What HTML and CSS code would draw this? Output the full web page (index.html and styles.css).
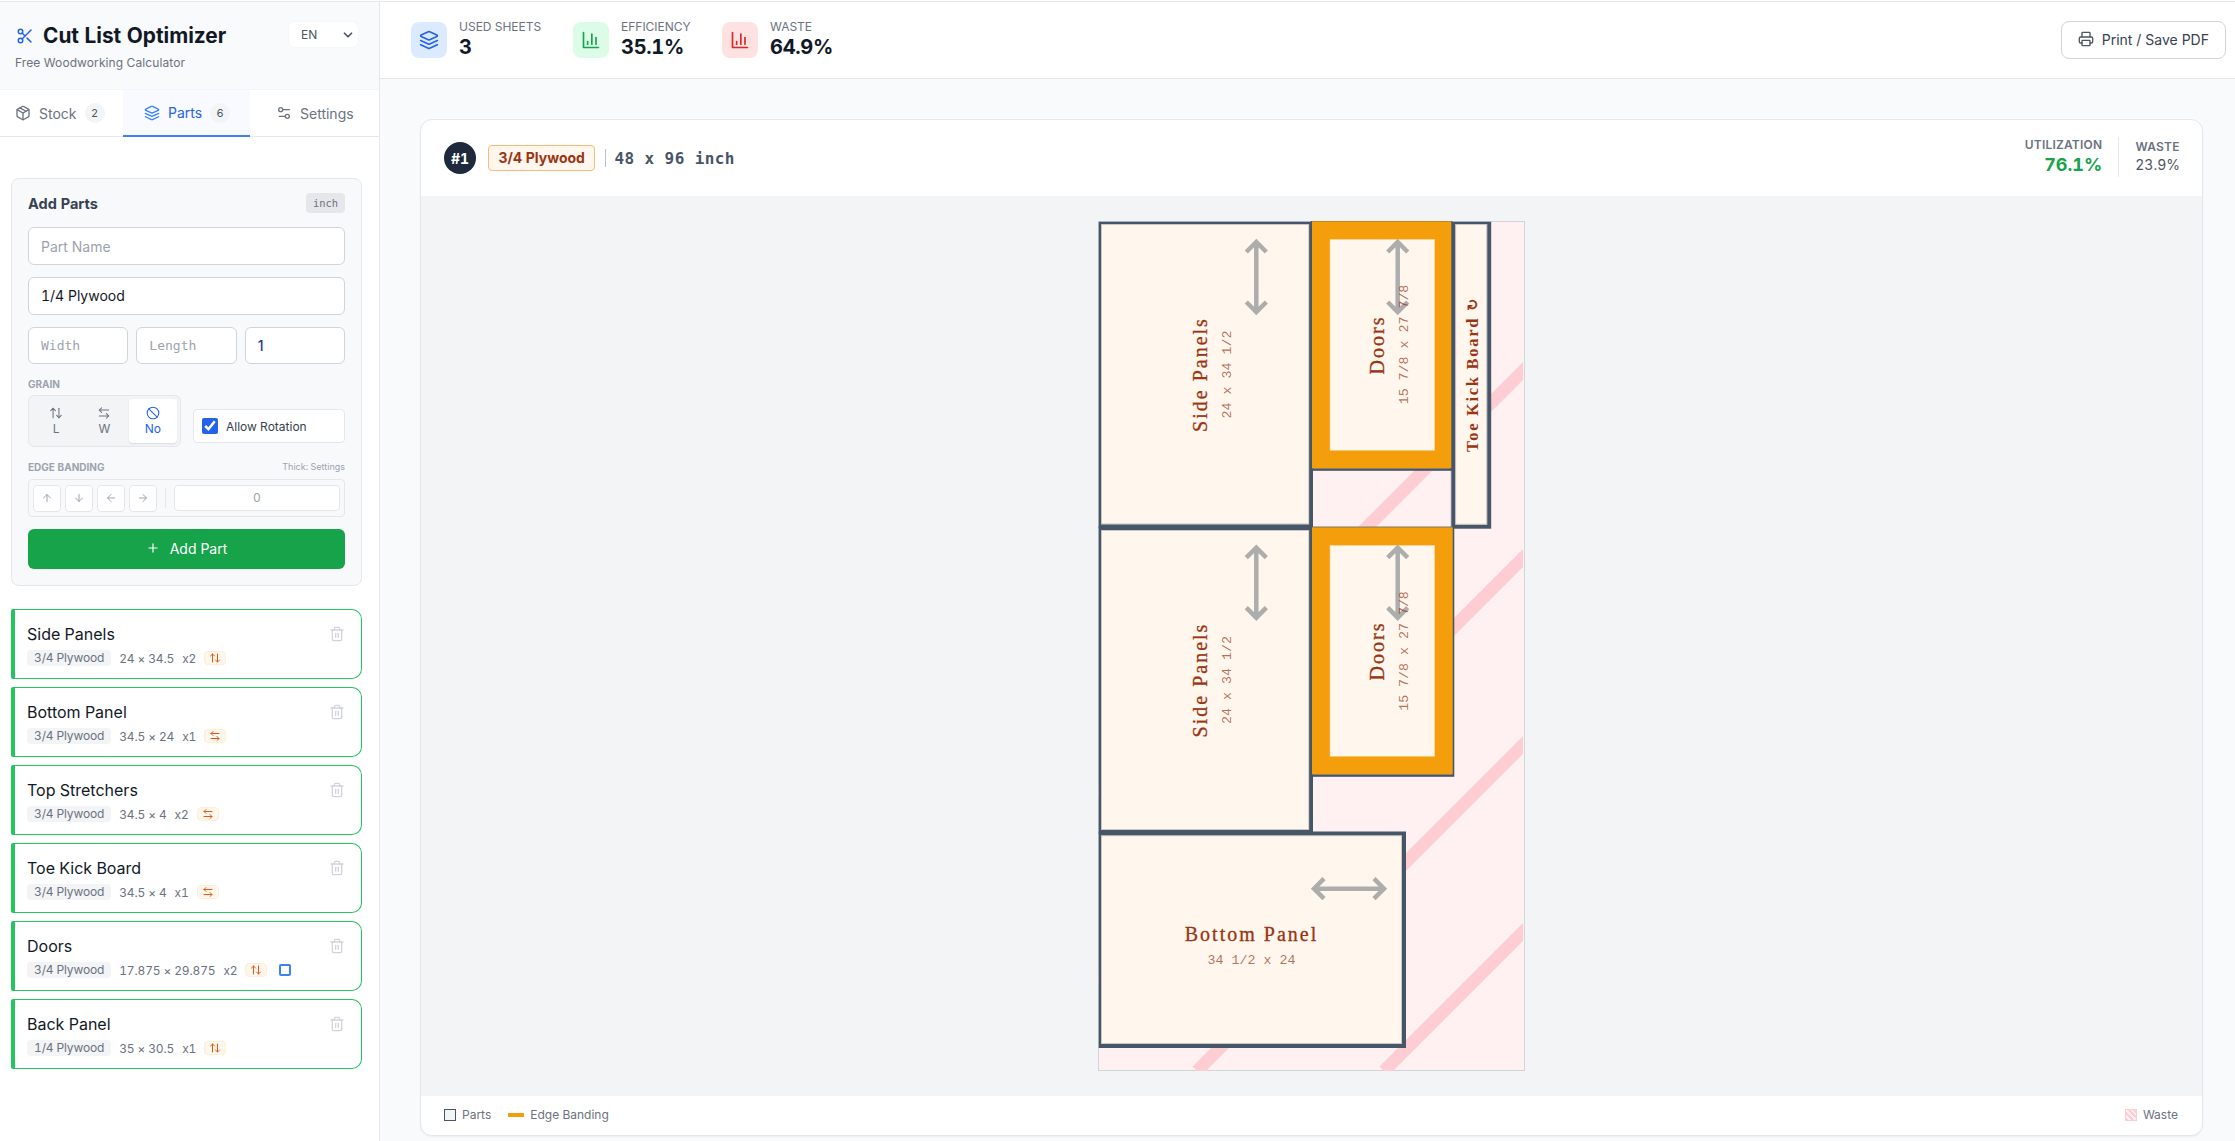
FILE: index.html
```html
<!DOCTYPE html>
<html lang="en">
<head>
    <meta charset="UTF-8">
    <meta name="viewport" content="width=device-width, initial-scale=1.0">
    <title>Cut List Optimizer</title>
    <link rel="stylesheet" href="styles.css">
</head>
<body>
    <svg class="icon-defs" aria-hidden="true">
        <symbol id="i-scissors" viewBox="0 0 24 24"><circle cx="6" cy="6" r="3"/><path d="M8.12 8.12 12 12"/><path d="M20 4 8.12 15.88"/><circle cx="6" cy="18" r="3"/><path d="M14.8 14.8 20 20"/></symbol>
        <symbol id="i-package" viewBox="0 0 24 24"><path d="M11 21.73a2 2 0 0 0 2 0l7-4A2 2 0 0 0 21 16V8a2 2 0 0 0-1-1.73l-7-4a2 2 0 0 0-2 0l-7 4A2 2 0 0 0 3 8v8a2 2 0 0 0 1 1.73z"/><path d="M12 22V12"/><path d="M3.29 7 12 12l8.71-5"/><path d="m7.5 4.27 9 5.15"/></symbol>
        <symbol id="i-layers" viewBox="0 0 24 24"><path d="m12.83 2.18a2 2 0 0 0-1.66 0L2.6 6.08a1 1 0 0 0 0 1.83l8.58 3.91a2 2 0 0 0 1.66 0l8.58-3.9a1 1 0 0 0 0-1.83Z"/><path d="m22 17.65-9.17 4.16a2 2 0 0 1-1.66 0L2 17.65"/><path d="m22 12.65-9.17 4.16a2 2 0 0 1-1.66 0L2 12.65"/></symbol>
        <symbol id="i-sliders" viewBox="0 0 24 24"><path d="M20 7h-9"/><path d="M14 17H5"/><circle cx="17" cy="17" r="3"/><circle cx="7" cy="7" r="3"/></symbol>
        <symbol id="i-chart" viewBox="0 0 24 24"><path d="M3 3v18h18"/><path d="M18 17V9"/><path d="M13 17V5"/><path d="M8 17v-3"/></symbol>
        <symbol id="i-printer" viewBox="0 0 24 24"><path d="M6 18H4a2 2 0 0 1-2-2v-5a2 2 0 0 1 2-2h16a2 2 0 0 1 2 2v5a2 2 0 0 1-2 2h-2"/><path d="M6 9V3a1 1 0 0 1 1-1h10a1 1 0 0 1 1 1v6"/><rect x="6" y="14" width="12" height="8" rx="1"/></symbol>
        <symbol id="i-updown" viewBox="0 0 24 24"><path d="m21 16-4 4-4-4"/><path d="M17 20V4"/><path d="m3 8 4-4 4 4"/><path d="M7 4v16"/></symbol>
        <symbol id="i-leftright" viewBox="0 0 24 24"><path d="M8 3 4 7l4 4"/><path d="M4 7h16"/><path d="m16 21 4-4-4-4"/><path d="M20 17H4"/></symbol>
        <symbol id="i-ban" viewBox="0 0 24 24"><circle cx="12" cy="12" r="10"/><path d="m4.9 4.9 14.2 14.2"/></symbol>
        <symbol id="i-trash" viewBox="0 0 24 24"><path d="M3 6h18"/><path d="M19 6v14c0 1-1 2-2 2H7c-1 0-2-1-2-2V6"/><path d="M8 6V4c0-1 1-2 2-2h4c1 0 2 1 2 2v2"/><path d="M10 11v6"/><path d="M14 11v6"/></symbol>
        <symbol id="i-plus" viewBox="0 0 24 24"><path d="M5 12h14"/><path d="M12 5v14"/></symbol>
        <symbol id="i-up" viewBox="0 0 24 24"><path d="m5 12 7-7 7 7"/><path d="M12 19V5"/></symbol>
        <symbol id="i-down" viewBox="0 0 24 24"><path d="M12 5v14"/><path d="m19 12-7 7-7-7"/></symbol>
        <symbol id="i-left" viewBox="0 0 24 24"><path d="m12 19-7-7 7-7"/><path d="M19 12H5"/></symbol>
        <symbol id="i-right" viewBox="0 0 24 24"><path d="M5 12h14"/><path d="m12 5 7 7-7 7"/></symbol>
        <symbol id="i-chevron" viewBox="0 0 24 24"><path d="m6 9 6 6 6-6"/></symbol>
    </svg>

    <div class="app">
        <aside class="sidebar">
            <header class="brand">
                <div class="brand-text">
                    <h1 class="brand-title"><svg class="icon brand-icon"><use href="#i-scissors"/></svg>Cut List Optimizer</h1>
                    <p class="brand-sub">Free Woodworking Calculator</p>
                </div>
                <div class="lang">EN<svg class="icon lang-chevron"><use href="#i-chevron"/></svg></div>
            </header>

            <nav class="tabs">
                <div class="tab tab-stock"><svg class="icon tab-icon"><use href="#i-package"/></svg>Stock<span class="tab-badge">2</span></div>
                <div class="tab tab-parts"><svg class="icon tab-icon"><use href="#i-layers"/></svg>Parts<span class="tab-badge">6</span></div>
                <div class="tab tab-settings"><svg class="icon tab-icon"><use href="#i-sliders"/></svg>Settings</div>
            </nav>

            <section class="add-card">
                <div class="add-head">
                    <h2 class="add-title">Add Parts</h2>
                    <span class="unit">inch</span>
                </div>
                <input class="field" type="text" placeholder="Part Name">
                <div class="field field-select">1/4 Plywood</div>
                <div class="dims">
                    <input class="field field-mono" type="text" placeholder="Width">
                    <input class="field field-mono" type="text" placeholder="Length">
                    <input class="field field-qty" type="text" value="1">
                </div>

                <div class="section-label">Grain</div>
                <div class="grain-row">
                    <div class="grain">
                        <div class="grain-btn"><svg class="icon"><use href="#i-updown"/></svg>L</div>
                        <div class="grain-btn"><svg class="icon"><use href="#i-leftright"/></svg>W</div>
                        <div class="grain-btn grain-active"><svg class="icon"><use href="#i-ban"/></svg>No</div>
                    </div>
                    <label class="rotation"><input type="checkbox" checked>Allow Rotation</label>
                </div>

                <div class="edge-head">
                    <span class="section-label">Edge Banding</span>
                    <span class="edge-hint">Thick: Settings</span>
                </div>
                <div class="edge">
                    <div class="edge-btn"><svg class="icon"><use href="#i-up"/></svg></div>
                    <div class="edge-btn"><svg class="icon"><use href="#i-down"/></svg></div>
                    <div class="edge-btn"><svg class="icon"><use href="#i-left"/></svg></div>
                    <div class="edge-btn"><svg class="icon"><use href="#i-right"/></svg></div>
                    <span class="edge-sep"></span>
                    <div class="edge-value">0</div>
                </div>

                <button class="add-btn"><svg class="icon"><use href="#i-plus"/></svg>Add Part</button>
            </section>

            <ul class="parts">
                <li class="part">
                    <div class="part-name">Side Panels</div>
                    <div class="part-meta"><span class="pill">3/4 Plywood</span><span>24 × 34.5</span><span>x2</span><span class="grain-tag"><svg class="icon"><use href="#i-updown"/></svg></span></div>
                    <svg class="icon part-trash"><use href="#i-trash"/></svg>
                </li>
                <li class="part">
                    <div class="part-name">Bottom Panel</div>
                    <div class="part-meta"><span class="pill">3/4 Plywood</span><span>34.5 × 24</span><span>x1</span><span class="grain-tag"><svg class="icon"><use href="#i-leftright"/></svg></span></div>
                    <svg class="icon part-trash"><use href="#i-trash"/></svg>
                </li>
                <li class="part">
                    <div class="part-name">Top Stretchers</div>
                    <div class="part-meta"><span class="pill">3/4 Plywood</span><span>34.5 × 4</span><span>x2</span><span class="grain-tag"><svg class="icon"><use href="#i-leftright"/></svg></span></div>
                    <svg class="icon part-trash"><use href="#i-trash"/></svg>
                </li>
                <li class="part">
                    <div class="part-name">Toe Kick Board</div>
                    <div class="part-meta"><span class="pill">3/4 Plywood</span><span>34.5 × 4</span><span>x1</span><span class="grain-tag"><svg class="icon"><use href="#i-leftright"/></svg></span></div>
                    <svg class="icon part-trash"><use href="#i-trash"/></svg>
                </li>
                <li class="part">
                    <div class="part-name">Doors</div>
                    <div class="part-meta"><span class="pill">3/4 Plywood</span><span>17.875 × 29.875</span><span>x2</span><span class="grain-tag"><svg class="icon"><use href="#i-updown"/></svg></span><span class="edge-mark"></span></div>
                    <svg class="icon part-trash"><use href="#i-trash"/></svg>
                </li>
                <li class="part">
                    <div class="part-name">Back Panel</div>
                    <div class="part-meta"><span class="pill">1/4 Plywood</span><span>35 × 30.5</span><span>x1</span><span class="grain-tag"><svg class="icon"><use href="#i-updown"/></svg></span></div>
                    <svg class="icon part-trash"><use href="#i-trash"/></svg>
                </li>
            </ul>
        </aside>

        <main class="main">
            <header class="topbar">
                <div class="stat stat-sheets">
                    <span class="stat-icon stat-blue"><svg class="icon"><use href="#i-layers"/></svg></span>
                    <div><div class="stat-label">Used Sheets</div><div class="stat-value">3</div></div>
                </div>
                <div class="stat stat-eff">
                    <span class="stat-icon stat-green"><svg class="icon"><use href="#i-chart"/></svg></span>
                    <div><div class="stat-label">Efficiency</div><div class="stat-value">35.1%</div></div>
                </div>
                <div class="stat">
                    <span class="stat-icon stat-red"><svg class="icon"><use href="#i-chart"/></svg></span>
                    <div><div class="stat-label">Waste</div><div class="stat-value">64.9%</div></div>
                </div>
                <button class="print-btn"><svg class="icon"><use href="#i-printer"/></svg>Print / Save PDF</button>
            </header>

            <div class="content">
                <section class="sheet-card">
                    <header class="sheet-head">
                        <span class="sheet-no">#1</span>
                        <span class="sheet-material">3/4 Plywood</span>
                        <span class="sheet-sep"></span>
                        <span class="sheet-size">48 x 96 inch</span>
                        <div class="sheet-stats">
                            <div class="util">
                                <div class="util-label">Utilization</div>
                                <div class="util-value">76.1%</div>
                            </div>
                            <div class="sheet-waste">
                                <div class="util-label">Waste</div>
                                <div class="waste-value">23.9%</div>
                            </div>
                        </div>
                    </header>

                    <div class="canvas">
                        <svg class="layout" width="427" height="850" viewBox="0 0 427 850">
                            <defs>
                                <clipPath id="sheet-clip"><rect x="0" y="0" width="425" height="850"/></clipPath>
                                <clipPath id="parts-clip"><rect x="0.7" y="0.7" width="426" height="849"/></clipPath>
                                <path id="grain-arrow" d="M0 0V70M-10 10 0 0 10 10M-10 60 0 70 10 60"/>
                            </defs>

                            <rect class="sheet-bg" x="0.5" y="0.5" width="426" height="849"/>
                            <g class="hatch" clip-path="url(#sheet-clip)">
                                <path d="M575 0 0 575"/>
                                <path d="M762 0 0 762"/>
                                <path d="M949 0 99 850"/>
                                <path d="M1136 0 286 850"/>
                            </g>

                            <rect class="offcut" x="214" y="248" width="139" height="58"/>

                            <g clip-path="url(#parts-clip)">
                                <rect class="part-box" x="1" y="1" width="212" height="304.3"/>
                                <rect class="part-box" x="1" y="307" width="212" height="304"/>
                                <rect class="part-box" x="1" y="612.5" width="305" height="212.5"/>
                                <rect class="part-box" x="355.3" y="1" width="35.9" height="304.7"/>
                            </g>

                            <rect class="part-line" x="3.5" y="3.5" width="207.3" height="299.4"/>
                            <rect class="part-line" x="3.5" y="309.5" width="207.3" height="299"/>
                            <rect class="part-line" x="3.5" y="614.8" width="300" height="207.7"/>
                            <rect class="part-line" x="357.7" y="3.5" width="31" height="299.7"/>

                            <!-- doors sit under their banding, only a sliver of stroke shows -->
                            <rect class="door-back" x="214" y="1" width="139" height="247.5"/>
                            <rect class="banding" x="214" y="0.3" width="139.3" height="247"/>
                            <rect class="part-fill" x="232" y="18.3" width="104.7" height="211"/>
                            <rect class="door-back" x="214" y="307" width="141" height="247.5"/>
                            <rect class="banding" x="214" y="306.3" width="140.7" height="247"/>
                            <rect class="part-fill" x="232" y="324.3" width="104.7" height="211"/>

                            <g class="arrow">
                                <use href="#grain-arrow" transform="translate(158.3 21)"/>
                                <use href="#grain-arrow" transform="translate(299.7 21)"/>
                                <use href="#grain-arrow" transform="translate(158.3 326.7)"/>
                                <use href="#grain-arrow" transform="translate(299.7 326.7)"/>
                                <use href="#grain-arrow" transform="translate(286 667.7) rotate(90)"/>
                            </g>

                            <text class="part-label" transform="translate(109 153.5) rotate(-90)">Side Panels</text>
                            <text class="part-dim" transform="translate(133 153.5) rotate(-90)">24 x 34 1/2</text>
                            <text class="part-label" transform="translate(286 124) rotate(-90)">Doors</text>
                            <text class="part-dim" transform="translate(309.7 123.5) rotate(-90)">15 7/8 x 27 7/8</text>
                            <text class="part-label part-small" transform="translate(380 153.4) rotate(-90)">Toe Kick Board <tspan class="part-rotated">↻</tspan></text>
                            <text class="part-label" transform="translate(109 459) rotate(-90)">Side Panels</text>
                            <text class="part-dim" transform="translate(133 459) rotate(-90)">24 x 34 1/2</text>
                            <text class="part-label" transform="translate(286 430) rotate(-90)">Doors</text>
                            <text class="part-dim" transform="translate(309.7 430) rotate(-90)">15 7/8 x 27 7/8</text>
                            <text class="part-label" x="153.5" y="719.7">Bottom Panel</text>
                            <text class="part-dim" x="153.5" y="743">34 1/2 x 24</text>
                        </svg>
                    </div>

                    <footer class="legend">
                        <span class="legend-item"><span class="swatch-part"></span>Parts</span>
                        <span class="legend-item"><span class="swatch-edge"></span>Edge Banding</span>
                        <span class="legend-item legend-waste"><span class="swatch-waste"></span>Waste</span>
                    </footer>
                </section>
            </div>
        </main>
    </div>
</body>
</html>
```

FILE: styles.css
```css
* {
    box-sizing: border-box;
}

body {
    margin: 0;
    height: 100vh;
    padding-top: 1px;
    overflow: hidden;
    background-color: #fff;
    color: #111827;
    font-family: Inter, "Noto Sans", sans-serif;
    font-variant-numeric: tabular-nums;
}

.icon-defs {
    display: none;
}

.icon {
    width: 16px;
    height: 16px;
    fill: none;
    stroke: currentColor;
    stroke-width: 2;
    stroke-linecap: round;
    stroke-linejoin: round;
    flex-shrink: 0;
}

.app {
    display: flex;
    height: 1140px;
    overflow: hidden;
    border-top: 1px solid #e5e7eb;
}

/* sidebar */
.sidebar {
    width: 380px;
    flex-shrink: 0;
    border-right: 1px solid #e5e7eb;
    background-color: #fff;
}

.brand {
    display: flex;
    justify-content: space-between;
    height: 88px;
    padding: 20px 21px 0 15px;
    background-color: #f9fafb;
    border-bottom: 1px solid #f3f4f6;
}

.brand-title {
    display: flex;
    align-items: center;
    gap: 9px;
    margin: 0;
    font-size: 20.8px;
    line-height: 28px;
    font-weight: 700;
    color: #111827;
}

.brand-icon {
    width: 18px;
    height: 18px;
    margin-left: 1px;
    color: #2563eb;
}

.brand-sub {
    margin: 5px 0 0;
    font-size: 12px;
    line-height: 16px;
    letter-spacing: 0.1px;
    color: #6b7280;
}

.lang {
    display: flex;
    justify-content: space-between;
    align-items: center;
    width: 69px;
    height: 25px;
    padding: 0 3px 0 12px;
    background-color: #fff;
    border-radius: 6px;
    box-shadow: 0 0 2px rgba(0, 0, 0, 0.06);
    font-size: 12px;
    color: #4b5563;
}

.lang-chevron {
    width: 14px;
    height: 14px;
    stroke-width: 3;
    color: #4b5563;
}

.tabs {
    display: flex;
    height: 47px;
    border-bottom: 1px solid #e5e7eb;
}

.tab {
    display: flex;
    align-items: center;
    font-size: 14px;
    color: #6b7280;
}

.tab-icon {
    margin-right: 8px;
}

.tab-badge {
    display: flex;
    align-items: center;
    justify-content: center;
    width: 20px;
    height: 20px;
    margin-left: 8px;
    border-radius: 50%;
    background-color: #f3f4f6;
    font-size: 11px;
    color: #4b5563;
}

.tab-stock {
    width: 123px;
    padding-left: 15px;
}

.tab-parts {
    width: 127px;
    padding-left: 21px;
    color: #2563eb;
    background-color: #f8faff;
    border-bottom: 2px solid #3b82f6;
    margin-bottom: -1px;
}

.tab-parts .tab-icon {
    color: #3b82f6;
}

.tab-settings {
    padding-left: 26px;
}

.add-card {
    margin: 41px 17px 0 11px;
    padding: 12px 16px 16px;
    height: 408px;
    background-color: #f8f9fb;
    border: 1px solid #e5e7eb;
    border-radius: 8px;
}

.add-head {
    display: flex;
    justify-content: space-between;
    align-items: center;
    height: 24px;
    margin-bottom: 12px;
}

.add-title {
    margin: 0;
    font-size: 14.5px;
    font-weight: 700;
    color: #374151;
}

.unit {
    padding: 2px 7px;
    background-color: #e5e7eb;
    border-radius: 4px;
    font-family: "DejaVu Sans Mono", monospace;
    font-size: 10.4px;
    line-height: 16px;
    color: #6b7280;
}

.field {
    display: block;
    width: 100%;
    height: 38px;
    padding: 0 12px;
    margin-bottom: 12px;
    background-color: #fff;
    border: 1px solid #d1d5db;
    border-radius: 6px;
    font-family: Inter, "Noto Sans", sans-serif;
    font-size: 14px;
    line-height: 35px;
    color: #111827;
}

.field::placeholder {
    color: #9ca3af;
    opacity: 1;
}

.field-mono {
    font-family: "DejaVu Sans Mono", monospace;
    font-size: 13px;
}

.field-qty {
    font-weight: 500;
    color: #1e3a8a;
}

.dims {
    display: grid;
    grid-template-columns: repeat(3, 1fr);
    gap: 8px;
}

.dims .field {
    height: 37px;
    margin-bottom: 0;
}

.section-label {
    margin-top: 14px;
    font-size: 10px;
    line-height: 12px;
    font-weight: 700;
    text-transform: uppercase;
    color: #9ca3af;
}

.grain-row {
    display: flex;
    align-items: flex-end;
    gap: 12px;
    margin-top: 5px;
}

.grain {
    display: flex;
    width: 153px;
    height: 52px;
    padding: 3px;
    background-color: #f3f4f6;
    border: 1px solid #e5e7eb;
    border-radius: 6px;
}

.grain-btn {
    display: flex;
    flex-direction: column;
    align-items: center;
    justify-content: center;
    flex: 1;
    gap: 1px;
    font-size: 12px;
    line-height: 15px;
    color: #6b7280;
}

.grain-btn .icon {
    width: 14px;
    height: 14px;
    stroke-width: 1.8;
}

.grain-active {
    background-color: #fff;
    border-radius: 4px;
    color: #2563eb;
    box-shadow: 0 1px 2px rgba(0, 0, 0, 0.1);
}

.rotation {
    display: flex;
    align-items: center;
    gap: 8px;
    width: 152px;
    height: 34px;
    margin-bottom: 4px;
    padding-left: 8px;
    background-color: #fff;
    border: 1px solid #e5e7eb;
    border-radius: 4px;
    font-size: 12px;
    color: #374151;
}

.rotation input {
    width: 16px;
    height: 16px;
    margin: 0;
    accent-color: #2563eb;
}

.edge-head {
    display: flex;
    justify-content: space-between;
    align-items: flex-end;
    margin-top: 14px;
}

.edge-head .section-label {
    margin-top: 0;
}

.edge-hint {
    font-size: 9px;
    line-height: 12px;
    color: #9ca3af;
}

.edge {
    display: flex;
    align-items: center;
    gap: 4px;
    height: 38px;
    margin-top: 6px;
    padding: 0 4px;
    border: 1px solid #e5e7eb;
    border-radius: 4px;
}

.edge-btn {
    display: flex;
    align-items: center;
    justify-content: center;
    width: 28px;
    height: 27px;
    background-color: #fff;
    border: 1px solid #e5e7eb;
    border-radius: 4px;
    color: #9ca3af;
}

.edge-btn .icon {
    width: 12px;
    height: 12px;
}

.edge-sep {
    width: 1px;
    height: 20px;
    margin: 0 4px;
    background-color: #e5e7eb;
}

.edge-value {
    flex: 1;
    height: 26px;
    background-color: #fff;
    border: 1px solid #e5e7eb;
    border-radius: 4px;
    text-align: center;
    font-size: 12px;
    line-height: 24px;
    color: #9ca3af;
}

.add-btn {
    display: flex;
    align-items: center;
    justify-content: center;
    gap: 10px;
    width: 100%;
    height: 40px;
    margin-top: 12px;
    padding-bottom: 3px;
    background-color: #16a34a;
    border: 0;
    border-radius: 6px;
    font-family: Inter, "Noto Sans", sans-serif;
    font-size: 14px;
    font-weight: 400;
    color: #fff;
}

.add-btn .icon {
    width: 14px;
    height: 14px;
}

.parts {
    display: flex;
    flex-direction: column;
    gap: 8px;
    margin: 23px 17px 0 11px;
    padding: 0;
    list-style: none;
}

.part {
    position: relative;
    height: 70px;
    padding: 13px 12px 0 12px;
    background-color: #fff;
    border: 1px solid #22c55e;
    border-left-width: 4px;
    border-radius: 2px 10px 10px 2px;
}

.part-name {
    font-size: 16px;
    line-height: 22px;
    color: #111827;
}

.part-meta {
    display: flex;
    align-items: center;
    gap: 8px;
    margin-top: 5px;
    font-size: 12px;
    letter-spacing: -0.15px;
    color: #6b7280;
}

.pill {
    padding: 0 7px;
    line-height: 16px;
    background-color: #f3f4f6;
    border-radius: 4px;
}

.grain-tag {
    display: flex;
    align-items: center;
    justify-content: center;
    width: 22px;
    height: 14px;
    background-color: #fff7ed;
    border: 1px solid #ffedd5;
    border-radius: 4px;
    color: #ea580c;
}

.grain-tag .icon {
    width: 12px;
    height: 12px;
}

.edge-mark {
    width: 12px;
    height: 12px;
    margin-left: 4px;
    border: 2px solid #3b82f6;
    border-radius: 2px;
}

.part-trash {
    position: absolute;
    top: 16px;
    right: 16px;
    color: #d1d5db;
}

/* main */
.main {
    flex: 1;
    display: flex;
    flex-direction: column;
    min-width: 0;
    background-color: #f9fafb;
}

.topbar {
    display: flex;
    align-items: center;
    height: 77px;
    padding: 0 9px 0 31px;
    background-color: #fff;
    border-bottom: 1px solid #e5e7eb;
}

.stat {
    display: flex;
    align-items: center;
    gap: 12px;
}

.stat-sheets {
    width: 162px;
}

.stat-eff {
    width: 149px;
}

.stat-icon {
    display: flex;
    align-items: center;
    justify-content: center;
    width: 36px;
    height: 36px;
    border-radius: 8px;
}

.stat-icon .icon {
    width: 20px;
    height: 20px;
}

.stat-blue {
    background-color: #dbeafe;
    color: #2563eb;
}

.stat-green {
    background-color: #dcfce7;
    color: #16a34a;
}

.stat-red {
    background-color: #fee2e2;
    color: #dc2626;
}

.stat-label {
    font-size: 12px;
    line-height: 15px;
    text-transform: uppercase;
    color: #6b7280;
}

.stat-value {
    font-size: 20px;
    line-height: 27px;
    font-weight: 700;
    letter-spacing: -0.3px;
    color: #111827;
}

.print-btn {
    display: flex;
    align-items: center;
    gap: 8px;
    height: 38px;
    margin-left: auto;
    padding: 0 16px 2px 16px;
    background-color: #fff;
    border: 1px solid #d1d5db;
    border-radius: 8px;
    font-family: Inter, "Noto Sans", sans-serif;
    font-size: 14px;
    color: #374151;
}

.print-btn .icon {
    color: #4b5563;
}

.content {
    padding: 40px 32px 0 40px;
}

.sheet-card {
    height: 1017px;
    background-color: #fff;
    border: 1px solid #e5e7eb;
    border-radius: 12px;
    overflow: hidden;
    box-shadow: 0 1px 2px rgba(0, 0, 0, 0.05);
}

.sheet-head {
    display: flex;
    align-items: center;
    height: 76px;
    padding: 0 22px 0 23px;
}

.sheet-no {
    display: flex;
    align-items: center;
    justify-content: center;
    width: 32px;
    height: 32px;
    border-radius: 50%;
    background-color: #1e293b;
    font-size: 14px;
    font-weight: 700;
    color: #fff;
}

.sheet-material {
    margin-left: 12px;
    padding: 0 9.5px;
    line-height: 24px;
    background-color: #fff7ed;
    border: 1px solid #fdba74;
    border-radius: 4px;
    font-size: 14px;
    font-weight: 700;
    color: #9a3412;
}

.sheet-sep {
    width: 1px;
    height: 18px;
    margin: 0 8px 0 10px;
    background-color: #b8c2d0;
}

.sheet-size {
    font-family: "DejaVu Sans Mono", monospace;
    font-size: 16px;
    font-weight: 700;
    letter-spacing: 0.4px;
    color: #475569;
}

.sheet-stats {
    display: flex;
    align-items: center;
    margin-left: auto;
    padding-bottom: 2px;
}

.util {
    text-align: right;
    padding-right: 16px;
    border-right: 1px solid #e5e7eb;
}

.util-label {
    font-size: 12px;
    line-height: 16px;
    font-weight: 600;
    letter-spacing: 0.2px;
    text-transform: uppercase;
    color: #6b7280;
}

.util-value {
    font-size: 18px;
    line-height: 24px;
    font-weight: 700;
    color: #16a34a;
}

.sheet-waste {
    padding-left: 16px;
    text-align: center;
}

.waste-value {
    font-size: 14px;
    line-height: 20px;
    color: #4b5563;
}

.canvas {
    display: flex;
    justify-content: center;
    height: 900px;
    padding-top: 25px;
    background-color: #f3f4f6;
}

.layout {
    display: block;
}

.sheet-bg {
    fill: #fff1f2;
    stroke: #d1d5db;
}

.hatch path {
    stroke: #fecdd3;
    stroke-width: 12.7;
    fill: none;
}

.offcut {
    fill: none;
    stroke: #c9ccd2;
}

.part-box {
    fill: #fff7ed;
    stroke: #475569;
    stroke-width: 4;
}

.door-back {
    fill: #fff7ed;
    stroke: #475569;
    stroke-width: 2.6;
}

.part-line {
    fill: none;
    stroke: #bdbcb8;
    stroke-width: 0.8;
}

.banding {
    fill: #f59e0b;
}

.part-fill {
    fill: #fff7ed;
    stroke: #fcd08a;
    stroke-width: 0.6;
}

.arrow {
    fill: none;
    stroke: #adadad;
    stroke-width: 4.5;
}

/* labels are a serif spaced out to the width of a monospace */
.part-label {
    font-family: "Liberation Serif", serif;
    font-size: 20px;
    letter-spacing: 2px;
    text-anchor: middle;
    fill: #9a3412;
    stroke: #9a3412;
    stroke-width: 0.3;
}

.part-small {
    font-size: 16.5px;
    letter-spacing: 1.7px;
    font-weight: 700;
    stroke-width: 0;
}

.part-rotated {
    font-family: "DejaVu Sans", sans-serif;
    font-size: 15px;
}

.part-dim {
    font-family: "Liberation Mono", monospace;
    font-size: 13.3px;
    text-anchor: middle;
    fill: #9a3412;
    fill-opacity: 0.7;
}

.legend {
    display: flex;
    align-items: center;
    gap: 17px;
    height: 39px;
    padding: 0 24px 2px 23px;
    font-size: 12px;
    color: #6b7280;
}

.legend-item {
    display: flex;
    align-items: center;
    gap: 6px;
}

.legend-waste {
    margin-left: auto;
}

.swatch-part {
    width: 12px;
    height: 12px;
    background-color: #f3f4f6;
    border: 1.5px solid #475569;
}

.swatch-edge {
    width: 16px;
    height: 4px;
    background-color: #f59e0b;
}

.swatch-waste {
    width: 12px;
    height: 12px;
    background: repeating-linear-gradient(45deg, #fecdd3, #fecdd3 2px, #fff1f2 2px, #fff1f2 4px);
    border: 1px solid #fecdd3;
}
```
